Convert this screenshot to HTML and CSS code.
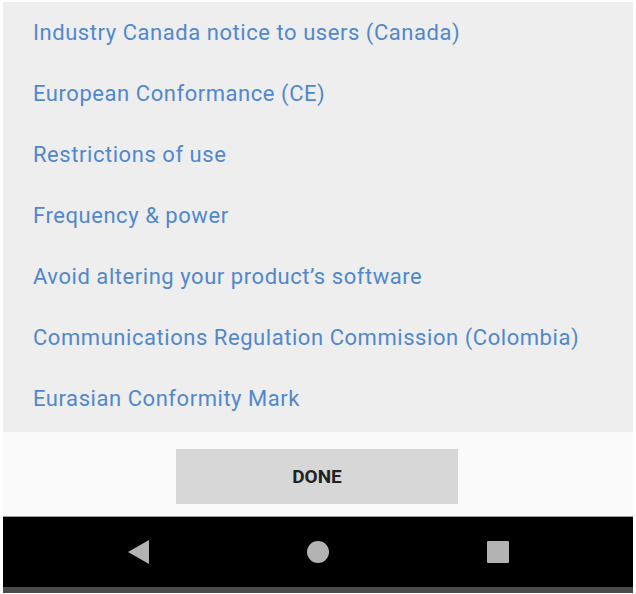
FILE: index.html
```html
<!DOCTYPE html>
<html>
<head>
<meta charset="utf-8">
<link rel="stylesheet" href="styles.css">
</head>
<body>
<div class="screen">
  <ul class="list">
    <li>Industry Canada notice to users (Canada)</li>
    <li>European Conformance (CE)</li>
    <li>Restrictions of use</li>
    <li>Frequency &amp; power</li>
    <li>Avoid altering your product’s software</li>
    <li>Communications Regulation Commission (Colombia)</li>
    <li>Eurasian Conformity Mark</li>
  </ul>
  <div class="footer">
    <button class="done">DONE</button>
  </div>
  <div class="navbar">
    <svg class="nav-icon" width="21" height="24" viewBox="0 0 21 24"><polygon points="21,0 21,24 0,12" fill="#b3b3b3"/></svg>
    <svg class="nav-icon" width="22" height="22" viewBox="0 0 22 22"><circle cx="11" cy="11" r="11" fill="#b3b3b3"/></svg>
    <svg class="nav-icon" width="22" height="22" viewBox="0 0 22 22"><rect x="0" y="0" width="22" height="22" rx="1" fill="#b3b3b3"/></svg>
  </div>
  <div class="bottom-strip"></div>
</div>
</body>
</html>
```
FILE: styles.css
```css
html, body {
  margin: 0;
  padding: 0;
  background: #ffffff;
}
.screen {
  width: 630px;
  margin: 0 3px;
  padding-top: 2px;
  font-family: Roboto, "Liberation Sans", Arial, sans-serif;
}
.list {
  list-style: none;
  margin: 0;
  padding: 0 0 3px 0;
  background: #eeeeee;
}
.list li {
  height: 61px;
  line-height: 61px;
  padding-left: 30px;
  font-size: 22px;
  letter-spacing: 0.55px;
  color: #5188cb;
  white-space: nowrap;
}
.footer {
  background: #fafafa;
  height: 85px;
  display: flex;
  justify-content: center;
  align-items: flex-start;
  padding-top: 17px;
  box-sizing: border-box;
  border-bottom: 1px solid #9a9a9a;
}
.done {
  width: 282px;
  height: 55px;
  margin-right: 2px;
  border: none;
  background: #d7d7d7;
  font-family: Roboto, "Liberation Sans", Arial, sans-serif;
  font-weight: 700;
  font-size: 19px;
  color: #222222;
  padding: 0;
}
.navbar {
  background: #000000;
  height: 70px;
  display: flex;
  justify-content: center;
  align-items: center;
  gap: 158px;
}
.nav-icon {
  display: block;
}
.bottom-strip {
  height: 6px;
  background: #4a4a4a;
}
```
